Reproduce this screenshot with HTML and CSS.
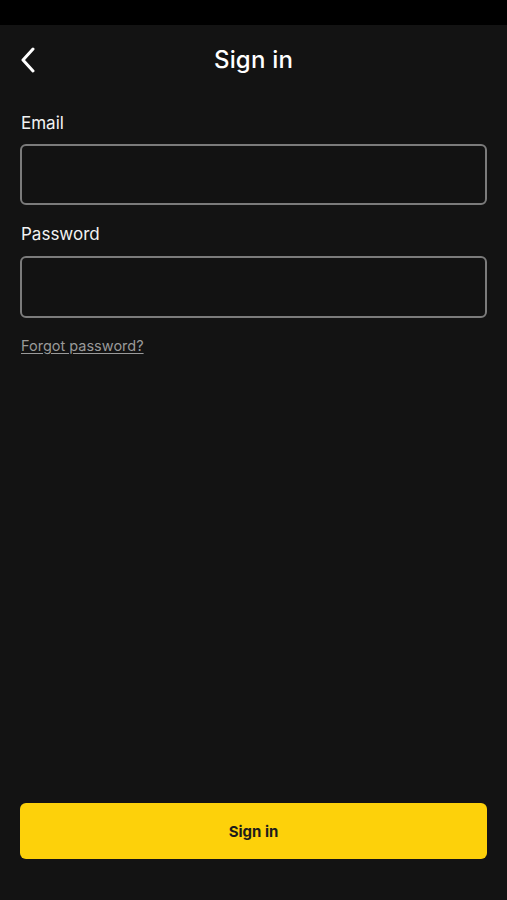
FILE: index.html
```html
<!DOCTYPE html>
<html lang="en">
<head>
<meta charset="utf-8">
<title>Sign in</title>
<link rel="stylesheet" href="styles.css">
</head>
<body>
<div class="status"></div>
<div class="screen">
  <header class="nav">
    <button class="back" aria-label="Back">
      <svg width="16" height="26" viewBox="0 0 16 26"><path d="M13 2 L3 13 L13 24" fill="none" stroke="#fff" stroke-width="3" stroke-linecap="round" stroke-linejoin="round"/></svg>
    </button>
    <h1 class="title">Sign in</h1>
  </header>
  <form class="form">
    <label class="field">
      <span class="label">Email</span>
      <input class="input" type="email">
    </label>
    <label class="field">
      <span class="label">Password</span>
      <input class="input" type="password">
    </label>
    <a class="forgot" href="#">Forgot password?</a>
  </form>
  <div class="footer">
    <button class="primary" type="button">Sign in</button>
  </div>
</div>
</body>
</html>
```
FILE: styles.css
```css
* { box-sizing: border-box; }
html, body { margin: 0; padding: 0; }
body {
  background: #131313;
  font-family: Inter, "Noto Sans", sans-serif;
  color: #fff;
  width: 507px;
  height: 900px;
  display: flex;
  flex-direction: column;
}
.status { height: 25px; background: #000; flex: none; }
.screen {
  flex: 1;
  display: flex;
  flex-direction: column;
  padding: 0 20px;
}
.nav {
  position: relative;
  height: 70px;
  display: flex;
  align-items: center;
  justify-content: center;
}
.back {
  position: absolute;
  left: 0;
  top: 22px;
  background: none;
  border: 0;
  padding: 0;
  width: 16px;
  height: 26px;
  display: flex;
}
.title {
  margin: 0;
  font-size: 24px;
  font-weight: 500;
  letter-spacing: 0.2px;
  margin-top: -1px;
}
.form {
  display: flex;
  flex-direction: column;
  padding-top: 17px;
}
.field {
  display: flex;
  flex-direction: column;
  margin-bottom: 18px;
}
.label {
  font-size: 17px;
  line-height: 22px;
  margin-bottom: 10px;
  color: #f2f2f2;
  padding-left: 1px;
}
.field + .field .label { margin-bottom: 11px; }
.field + .field .input { height: 62px; }
.input {
  height: 61px;
  width: 100%;
  background: #121212;
  border: 2px solid #7b7b7b;
  border-radius: 6px;
  color: #fff;
  font: inherit;
  padding: 0 14px;
  outline: none;
}
.forgot {
  margin-top: 1px;
  font-size: 14.5px;
  color: #9a9a9a;
  text-decoration: underline;
  text-underline-offset: 2px;
  align-self: flex-start;
  padding-left: 1px;
}
.footer {
  margin-top: auto;
  padding-bottom: 41px;
}
.primary {
  width: 100%;
  height: 56px;
  background: #fdd10a;
  border: 0;
  border-radius: 6px;
  font-family: inherit;
  font-weight: 700;
  font-size: 15px;
  color: #1c1c1c;
}
```
